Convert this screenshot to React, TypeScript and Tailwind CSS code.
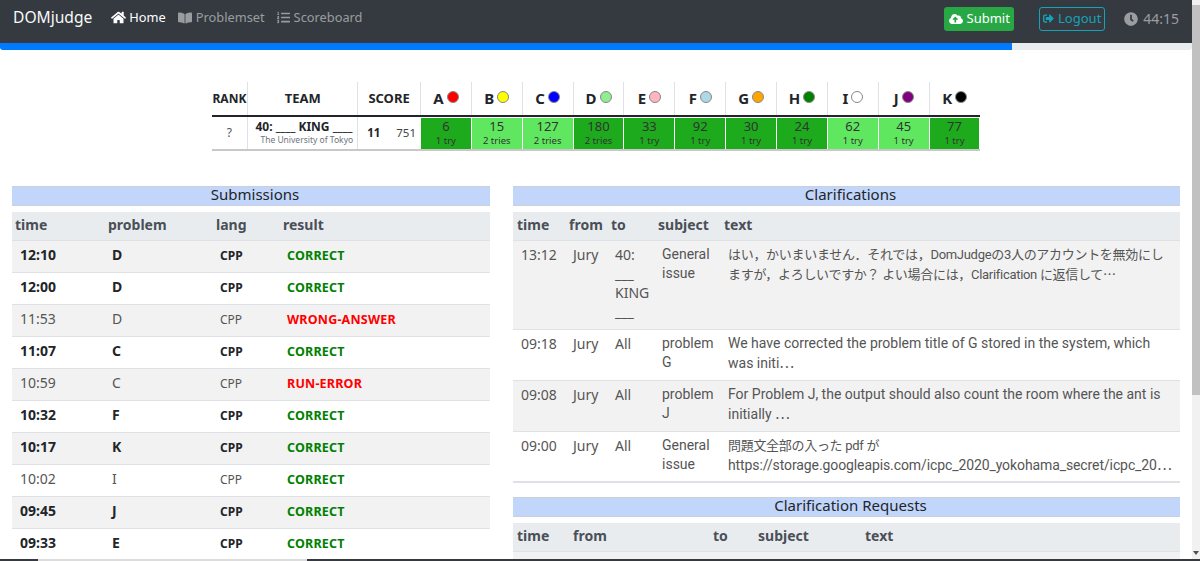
import { FaBookOpen, FaClock, FaCloudUploadAlt, FaHome, FaListOl, FaSignOutAlt } from "react-icons/fa";

const problems = [
  { id: "A", color: "bg-[#ff0000]", time: "6", tries: "1 try", first: true },
  { id: "B", color: "bg-[#ffff00]", time: "15", tries: "2 tries", first: false },
  { id: "C", color: "bg-[#0000ff]", time: "127", tries: "2 tries", first: false },
  { id: "D", color: "bg-[#90ee90]", time: "180", tries: "2 tries", first: true },
  { id: "E", color: "bg-[#ffb6c1]", time: "33", tries: "1 try", first: true },
  { id: "F", color: "bg-[#add8e6]", time: "92", tries: "1 try", first: true },
  { id: "G", color: "bg-[#ffa500]", time: "30", tries: "1 try", first: true },
  { id: "H", color: "bg-[#008000]", time: "24", tries: "1 try", first: true },
  { id: "I", color: "bg-[#ffffff]", time: "62", tries: "1 try", first: false },
  { id: "J", color: "bg-[#800080]", time: "45", tries: "1 try", first: false },
  { id: "K", color: "bg-[#000000]", time: "77", tries: "1 try", first: true },
];

const submissions = [
  { time: "12:10", problem: "D", result: "CORRECT", strong: true },
  { time: "12:00", problem: "D", result: "CORRECT", strong: true },
  { time: "11:53", problem: "D", result: "WRONG-ANSWER", strong: false },
  { time: "11:07", problem: "C", result: "CORRECT", strong: true },
  { time: "10:59", problem: "C", result: "RUN-ERROR", strong: false },
  { time: "10:32", problem: "F", result: "CORRECT", strong: true },
  { time: "10:17", problem: "K", result: "CORRECT", strong: true },
  { time: "10:02", problem: "I", result: "CORRECT", strong: false },
  { time: "09:45", problem: "J", result: "CORRECT", strong: true },
  { time: "09:33", problem: "E", result: "CORRECT", strong: true },
];

const clarifications = [
  {
    time: "13:12",
    to: ["40:", "___", "KING", "___"],
    subject: "General issue",
    lines: ["はい，かいまいません．それでは，DomJudgeの3人のアカウントを無効にし", "ますが，よろしいですか？ よい場合には，Clarification に返信して"],
    lineClass: ["text-[13px] tracking-[-0.3px]", "text-[13px] tracking-[-0.3px]"],
    height: "h-[89px]",
  },
  {
    time: "09:18",
    to: ["All"],
    subject: "problem G",
    lines: ["We have corrected the problem title of G stored in the system, which", "was initi"],
    lineClass: ["", ""],
    height: "h-[51px]",
  },
  {
    time: "09:08",
    to: ["All"],
    subject: "problem J",
    lines: ["For Problem J, the output should also count the room where the ant is", "initially "],
    lineClass: ["", ""],
    height: "h-[51px]",
  },
  {
    time: "09:00",
    to: ["All"],
    subject: "General issue",
    lines: ["問題文全部の入った pdf が", "https://storage.googleapis.com/icpc_2020_yokohama_secret/icpc_20"],
    lineClass: ["text-[13px] tracking-[-0.3px]", "tracking-[-0.1px]"],
    height: "h-[50px]",
  },
];

const SectionTitle = ({ children }: { children: string }) => (
  <div className="h-5 border-y border-[#c9d0d8] bg-[#c2d5fb] pl-2 text-center text-[15px] leading-[15px] text-[#212529]">
    {children}
  </div>
);

const App = () => {
  return (
    <div className="relative h-[561px] w-[1200px] overflow-hidden bg-white font-['Noto_Sans','Noto_Sans_CJK_JP',sans-serif] text-[#212529]">
      <div className="h-[561px] w-[1192px]">
        <nav className="flex h-[43px] items-center bg-[#343a40] pr-[13px] pb-[6px] pl-[13px]">
          <span className="pb-[2px] text-[15.6px] text-[#f8f9fa]">DOMjudge</span>
          <div className="ml-[19px] flex items-center gap-3 pb-[2px] text-[12.8px]">
            <span className="flex items-center gap-[3px] text-white">
              <FaHome className="text-[15px]" />
              Home
            </span>
            <span className="flex items-center gap-1 text-white/50">
              <FaBookOpen className="text-[14px]" />
              Problemset
            </span>
            <span className="flex items-center gap-1 text-white/50">
              <FaListOl className="text-[13px]" />
              Scoreboard
            </span>
          </div>
          <div className="ml-auto flex items-center text-[13px]">
            <span className="flex h-6 w-[70px] items-center justify-center gap-1 rounded-[3px] bg-[#28a745] text-white">
              <FaCloudUploadAlt className="text-[14px]" />
              Submit
            </span>
            <span className="ml-[25px] flex h-6 w-[66px] items-center justify-center gap-1 rounded-[3px] border border-[#17a2b8] text-[#17a2b8]">
              <FaSignOutAlt className="text-[11px]" />
              Logout
            </span>
            <span className="ml-[19px] flex items-center gap-[5px] text-[14px] text-[#9b9da0]">
              <FaClock className="text-[14px]" />
              44:15
            </span>
          </div>
        </nav>

        <div className="h-[7px] rounded-b-[3px] bg-[#e9ecef]">
          <div className="h-[7px] w-[1012px] rounded-bl-[3px] bg-[#007bff]" />
        </div>

        <div className="mt-8 flex justify-center">
          <div className="mr-[1px] w-[768px]">
            <div className="flex h-[35px] items-stretch border-b-2 border-[#212529] text-[13px] font-bold">
              <div className="flex w-[36px] items-center justify-center text-[12px] whitespace-nowrap">RANK</div>
              <div className="flex w-[110px] items-center justify-center border-l border-[#dee2e6]">TEAM</div>
              <div className="flex w-[63px] items-center justify-center border-l border-[#dee2e6]">SCORE</div>
              {problems.map((p) => (
                <div key={p.id} className="flex w-[51px] items-center justify-center gap-[3px] border-l border-[#dee2e6] text-[15px]">
                  {p.id}
                  <span className={`mb-[3px] size-[12px] rounded-full border border-[#888] ${p.color}`} />
                </div>
              ))}
            </div>
            <div className="flex h-[34px] items-stretch border-b-2 border-[#c8c8c8]">
              <div className="flex w-[36px] items-center justify-center text-[12px] text-[#555]">?</div>
              <div className="w-[110px] border-l border-[#dee2e6] pt-[2px] pl-[7px]">
                <div className="text-[12px] leading-[15px] font-bold whitespace-nowrap">40: ____ KING ____</div>
                <div className="pr-[4px] text-right text-[8.5px] leading-[12px] whitespace-nowrap text-[#6c757d]">The University of Tokyo</div>
              </div>
              <div className="flex w-[63px] items-center justify-between border-l border-[#dee2e6] pr-[4px] pl-[9px] text-[11.5px]">
                <b>11</b>
                <span className="text-[#444]">751</span>
              </div>
              {problems.map((p) => (
                <div key={p.id} className="w-[51px] pt-px pl-px">
                  <div className={`h-[31px] text-center text-[#333] ${p.first ? "bg-[#1daa1d]" : "bg-[#60e760]"}`}>
                    <div className="text-[13px] leading-[17px]">{p.time}</div>
                    <div className="text-[9.5px] leading-[12px]">{p.tries}</div>
                  </div>
                </div>
              ))}
            </div>
          </div>
        </div>

        <div className="mt-[35px] flex items-start gap-[23px] px-3">
          <div className="w-[478px] shrink-0">
            <SectionTitle>Submissions</SectionTitle>
            <div className="mt-[6px] flex h-7 items-center bg-[#e9ecef] pb-[3px] pl-[3px] text-[14px] font-bold text-[#495057]">
              <span className="w-[93px]">time</span>
              <span className="w-[108px]">problem</span>
              <span className="w-[67px]">lang</span>
              <span>result</span>
            </div>
            {submissions.map((s, i) => (
              <div
                key={s.time}
                className={`flex h-8 items-center border-t border-[#dee2e6] pl-[8px] text-[14px] ${i % 2 === 0 ? "bg-[#f2f2f2]" : "bg-white"} ${s.strong ? "font-bold" : "text-[#555]"}`}
              >
                <span className="w-[92px] pb-[4px]">{s.time}</span>
                <span className="w-[108px] pb-[4px]">{s.problem}</span>
                <span className="w-[67px] pb-[2px] text-[12px]">CPP</span>
                <span className={`text-[12.5px] font-bold tracking-[0.2px] ${s.result === "CORRECT" ? "text-[#008000]" : "text-[#ff0000]"}`}>
                  {s.result}
                </span>
              </div>
            ))}
          </div>

          <div className="w-[667px] shrink-0">
            <SectionTitle>Clarifications</SectionTitle>
            <div className="mt-[6px] flex h-7 items-center bg-[#e9ecef] pb-[3px] pl-1 text-[14px] font-bold text-[#495057]">
              <span className="w-[52px]">time</span>
              <span className="w-[42px]">from</span>
              <span className="w-[47px]">to</span>
              <span className="w-[66px]">subject</span>
              <span>text</span>
            </div>
            {clarifications.map((c, i) => (
              <div
                key={c.time}
                className={`flex border-t border-[#dee2e6] pt-[4px] pl-2 text-[14px] leading-[19px] text-[#555] ${c.height} ${i % 2 === 0 ? "bg-[#f2f2f2]" : "bg-white"}`}
              >
                <span className="w-[52px] shrink-0">{c.time}</span>
                <span className="w-[42px] shrink-0">Jury</span>
                <span className="w-[47px] shrink-0">
                  {c.to.map((t) => (
                    <span key={t} className="block">{t}</span>
                  ))}
                </span>
                <span className="w-[66px] shrink-0 pr-[10px] font-['Roboto','Noto_Sans_CJK_JP',sans-serif]">{c.subject}</span>
                <span className="w-[450px] font-['Roboto','Noto_Sans_CJK_JP',sans-serif] whitespace-nowrap">
                  {c.lines.map((line, n) => (
                    <span key={line} className={`block ${c.lineClass[n]}`}>
                      {line}
                      {n === 1 && <span className="font-['Noto_Sans_CJK_JP',sans-serif]">…</span>}
                    </span>
                  ))}
                </span>
              </div>
            ))}
            <div className="border-t-2 border-[#dee2e6]" />
            <div className="mt-[14px]">
              <SectionTitle>Clarification Requests</SectionTitle>
              <div className="mt-[6px] flex h-7 items-center bg-[#e9ecef] pb-[3px] pl-1 text-[14px] font-bold text-[#495057]">
                <span className="w-[56px]">time</span>
                <span className="w-[140px]">from</span>
                <span className="w-[45px]">to</span>
                <span className="w-[107px]">subject</span>
                <span>text</span>
              </div>
              <div className="h-8 border-t border-[#dee2e6] bg-[#f2f2f2]" />
            </div>
          </div>
        </div>
      </div>

      <div className="absolute top-0 right-0 h-[561px] w-2 bg-[#f1f1f1]">
        <div className="mt-[5px] h-[390px] bg-[#c1c1c1]" />
      </div>
      {/* window scrollbar arrow */}
      <div className="absolute right-[1px] bottom-[6px] size-0 border-x-[3px] border-t-[4px] border-x-transparent border-t-[#505050]" />
      <div className="absolute right-0 bottom-0 left-0 h-[2px] bg-[#343a40]">
        <div className="ml-[38px] h-[2px] w-[269px] bg-[#dcdcdc]" />
      </div>
    </div>
  );
};

export default App;
